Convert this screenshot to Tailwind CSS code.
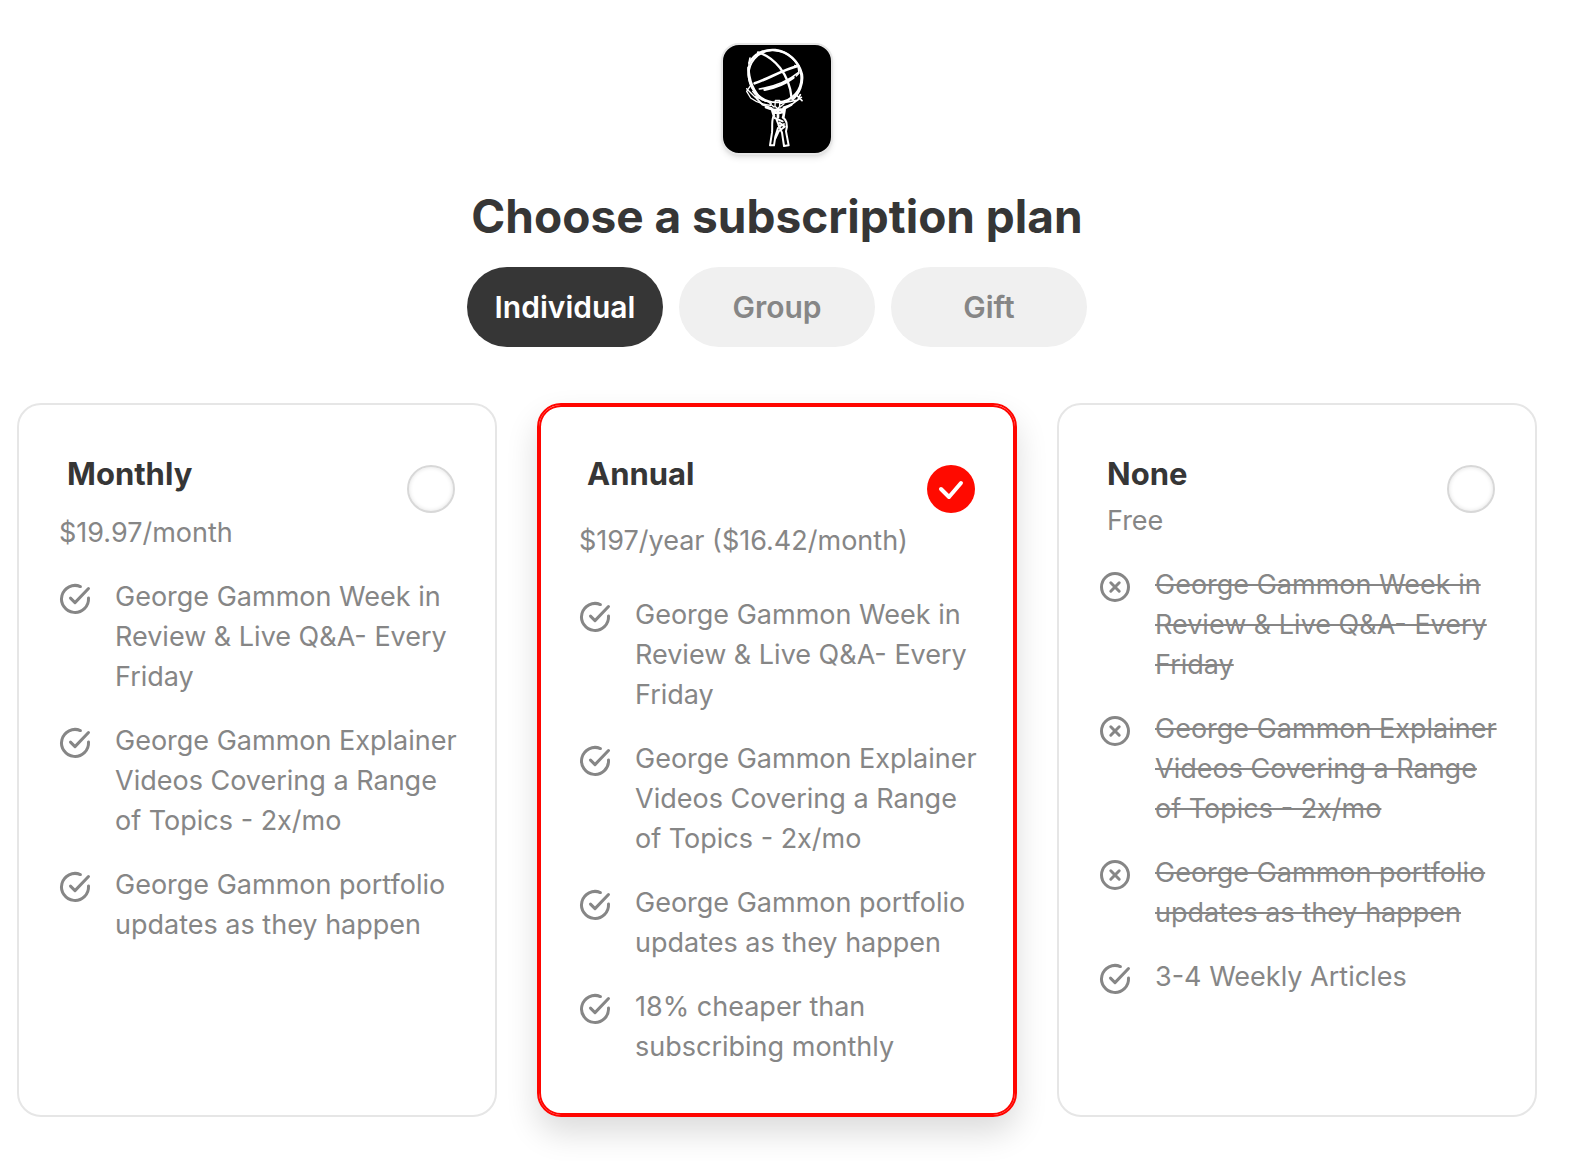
<!DOCTYPE html>
<html lang="en">
<head>
    <meta charset="UTF-8">
    <meta name="viewport" content="width=device-width, initial-scale=1.0">
    <title>Choose a subscription plan</title>
    <script src="https://cdn.jsdelivr.net/npm/@tailwindcss/browser@4"></script>
</head>
<body class="bg-white font-['Inter',sans-serif] text-[#363636]">
    <!-- Icon sprites -->
    <svg class="hidden">
        <symbol id="check-circle" viewBox="0 0 24 24" fill="none" stroke="currentColor" stroke-width="2" stroke-linecap="round" stroke-linejoin="round">
            <path d="M15.6 3.7A9 9 0 1 0 21 11.4"/>
            <path d="M21 5l-9 9.4-3-3"/>
        </symbol>
        <symbol id="x-circle" viewBox="0 0 24 24" fill="none" stroke="currentColor" stroke-width="2" stroke-linecap="round" stroke-linejoin="round">
            <circle cx="12" cy="12" r="9"/>
            <path d="M9.2 9.2l5.6 5.6M14.8 9.2l-5.6 5.6"/>
        </symbol>
    </svg>

    <main class="pt-[43px] pb-11 pl-[17px] pr-9">
        <!-- Header -->
        <header class="flex flex-col items-center">
            <a href="#" aria-label="Home" class="size-28 rounded-[18px] border-2 border-[#e6e6e6] bg-black overflow-hidden shadow-md">
                <svg viewBox="33 33 324 324" class="size-full" fill="none" stroke="#fff" stroke-linecap="round" stroke-linejoin="round">
                    <!-- Globe -->
                    <ellipse cx="189" cy="127" rx="81" ry="76" stroke-width="6" transform="rotate(40 189 127)"/>
                    <path d="M112 87c14-28 46-42 78-39 40 5 71 36 80 73 4 28-8 58-28 75" stroke-width="7"/>
                    <path d="M108 100c-2 38 12 76 52 101M114 72c-8 30-2 76 22 108" stroke-width="5"/>
                    <path d="M138 55c48 14 94 64 101 138" stroke-width="7"/>
                    <path d="M128 148c42-14 82-40 130-52" stroke-width="8"/>
                    <path d="M142 165c40-6 84-22 117-49" stroke-width="5"/>
                    <path d="M158 167c32-6 62-18 86-36" stroke-width="8"/>
                    <path d="M248 94l10 4 3 20-8 8" stroke-width="4"/>
                    <!-- Arms and stand -->
                    <path d="M116 154l-12 18 12 20c18 14 36 20 60 22M104 164l24 24 50 20M122 172c16 22 34 32 54 32" stroke-width="4"/>
                    <path d="M129 188l22 24 28 10M268 190l-30 22-24 8M265 182l-8 16-42 8M252 182l18 18M238 190c-8 12-20 16-32 18" stroke-width="5"/>
                    <!-- Figure -->
                    <path d="M190 199h13v18l-6 7-8-7zM174 209l12 10M204 219l12-10" stroke-width="4"/>
                    <path d="M162 220l24 8 26-2 26-14M180 226l6 20M218 226l-4 24M184 234l14 4 14-4M198 226v24" stroke-width="8"/>
                    <path d="M184 248c-6 16-2 32-4 48l-6 38h12l4-26 8-26" stroke-width="6"/>
                    <path d="M194 258l8 20 14-8M188 252l24 10" stroke-width="6"/>
                    <path d="M212 250c16 10 14 28 10 42l8 42-14 2-6-40-10-22M202 266l16 12-18 14-10 22" stroke-width="6"/>
                </svg>
            </a>
            <h1 class="mt-8 text-[46px] leading-[58px] font-bold">Choose a subscription plan</h1>
            <div class="mt-[22px] flex gap-4 text-3xl font-semibold">
                <button type="button" class="w-49 h-20 rounded-full bg-[#363636] text-white">Individual</button>
                <button type="button" class="w-49 h-20 rounded-full bg-[#f0f0f0] text-[#868686]">Group</button>
                <button type="button" class="w-49 h-20 rounded-full bg-[#f0f0f0] text-[#868686]">Gift</button>
            </div>
        </header>

        <!-- Plans -->
        <div class="mt-14 grid grid-cols-3 gap-10 text-[27px] leading-[40px] text-[#868686]">
            <!-- Monthly -->
            <section class="rounded-3xl border-2 border-[#e6e6e6] pt-12 pb-12 pl-[38px] pr-8">
                <div class="flex items-start">
                    <div class="flex-1">
                        <h2 class="pl-2.5 text-[31px] leading-[42px] font-bold text-[#363636]"><label for="monthly">Monthly</label></h2>
                        <p class="mt-[18px] pl-0.5">$19.97/month</p>
                    </div>
                    <input type="radio" name="plan" id="monthly" class="appearance-none size-12 shrink-0 mt-3 mr-2 rounded-full border-2 border-[#d8d8d8] bg-white shadow-[inset_0_0_4px_rgba(0,0,0,0.12)]">
                </div>
                <ul class="mt-6 space-y-6">
                    <li class="flex gap-[22px]">
                        <svg class="size-9 mt-1 shrink-0"><use href="#check-circle"/></svg>
                        <span>George Gammon Week in Review &amp; Live Q&amp;A- Every Friday</span>
                    </li>
                    <li class="flex gap-[22px]">
                        <svg class="size-9 mt-1 shrink-0"><use href="#check-circle"/></svg>
                        <span>George Gammon Explainer Videos Covering a Range of Topics - 2x/mo</span>
                    </li>
                    <li class="flex gap-[22px]">
                        <svg class="size-9 mt-1 shrink-0"><use href="#check-circle"/></svg>
                        <span>George Gammon portfolio updates as they happen</span>
                    </li>
                </ul>
            </section>

            <!-- Annual -->
            <section class="rounded-3xl border-2 border-[#ff0500] pt-12 pb-12 pl-[38px] pr-8 shadow-[inset_0_0_0_2px_#ff0500,0_16px_32px_rgba(0,0,0,0.14)]">
                <div class="flex items-start">
                    <div class="flex-1">
                        <h2 class="pl-2.5 text-[31px] leading-[42px] font-bold text-[#363636]"><label for="annual">Annual</label></h2>
                        <p class="mt-[26px] pl-0.5">$197/year ($16.42/month)</p>
                    </div>
                    <div class="relative size-12 shrink-0 mt-3 mr-2">
                        <input type="radio" name="plan" id="annual" checked class="block appearance-none size-12 rounded-full bg-[#ff0a00]">
                        <svg viewBox="0 0 48 48" class="absolute inset-0 size-12 pointer-events-none" fill="none" stroke="#fff" stroke-width="4" stroke-linecap="round" stroke-linejoin="round">
                            <path d="M14 24l8 8 12-14"/>
                        </svg>
                    </div>
                </div>
                <ul class="mt-[34px] space-y-6">
                    <li class="flex gap-[22px]">
                        <svg class="size-9 mt-1 shrink-0"><use href="#check-circle"/></svg>
                        <span>George Gammon Week in Review &amp; Live Q&amp;A- Every Friday</span>
                    </li>
                    <li class="flex gap-[22px]">
                        <svg class="size-9 mt-1 shrink-0"><use href="#check-circle"/></svg>
                        <span>George Gammon Explainer Videos Covering a Range of Topics - 2x/mo</span>
                    </li>
                    <li class="flex gap-[22px]">
                        <svg class="size-9 mt-1 shrink-0"><use href="#check-circle"/></svg>
                        <span>George Gammon portfolio updates as they happen</span>
                    </li>
                    <li class="flex gap-[22px]">
                        <svg class="size-9 mt-1 shrink-0"><use href="#check-circle"/></svg>
                        <span>18% cheaper than subscribing monthly</span>
                    </li>
                </ul>
            </section>

            <!-- None -->
            <section class="rounded-3xl border-2 border-[#e6e6e6] pt-12 pb-12 pl-[38px] pr-8">
                <div class="flex items-start">
                    <div class="flex-1">
                        <h2 class="pl-2.5 text-[31px] leading-[42px] font-bold text-[#363636]"><label for="none">None</label></h2>
                        <p class="mt-1.5 pl-2.5">Free</p>
                    </div>
                    <input type="radio" name="plan" id="none" class="appearance-none size-12 shrink-0 mt-3 mr-2 rounded-full border-2 border-[#d8d8d8] bg-white shadow-[inset_0_0_4px_rgba(0,0,0,0.12)]">
                </div>
                <ul class="mt-6 space-y-6">
                    <li class="flex gap-[22px]">
                        <svg class="size-9 mt-1 shrink-0"><use href="#x-circle"/></svg>
                        <s>George Gammon Week in Review &amp; Live Q&amp;A- Every Friday</s>
                    </li>
                    <li class="flex gap-[22px]">
                        <svg class="size-9 mt-1 shrink-0"><use href="#x-circle"/></svg>
                        <s>George Gammon Explainer Videos Covering a Range of Topics - 2x/mo</s>
                    </li>
                    <li class="flex gap-[22px]">
                        <svg class="size-9 mt-1 shrink-0"><use href="#x-circle"/></svg>
                        <s>George Gammon portfolio updates as they happen</s>
                    </li>
                    <li class="flex gap-[22px]">
                        <svg class="size-9 mt-1 shrink-0"><use href="#check-circle"/></svg>
                        <span>3-4 Weekly Articles</span>
                    </li>
                </ul>
            </section>
        </div>
    </main>
</body>
</html>
